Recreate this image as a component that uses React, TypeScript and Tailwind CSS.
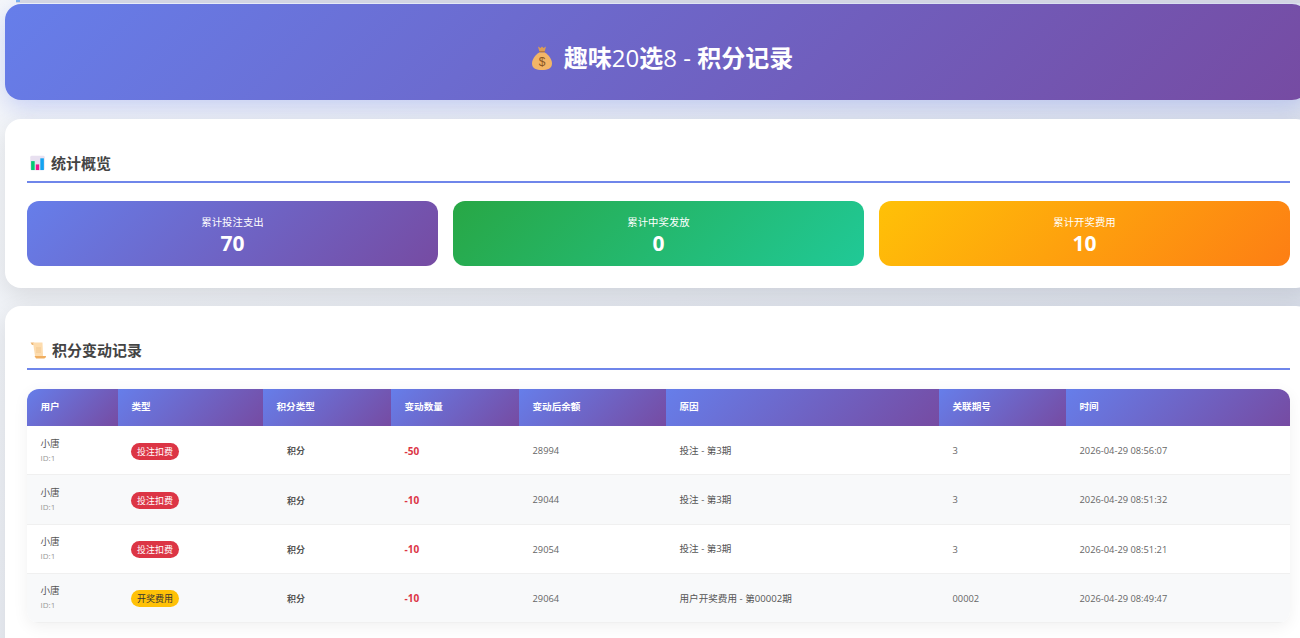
const cjk = "font-['Open_Sans','Noto_Sans_CJK_SC',sans-serif]";

function Bag() {
  return (
    <svg viewBox="0 0 20 24" className="w-[20px] h-[24px]">
      <path d="M6 0.5l2.5 1.5L10 0.5 11.5 2 14 0.5 12.8 5H7.2z" fill="#dd9c55" />
      <path d="M7.5 5h5l.6 1.6H6.9z" fill="#b9793c" />
      <path d="M7.2 6.5C3 9 0 13.5 0 17.5 0 22.5 4.5 24 10 24s10-1.5 10-6.500C20 13.500 17 9 12.800 6.500z" fill="#f3b566" />
      <text x="10" y="20" textAnchor="middle" fontSize="12" fontWeight="400" fill="#8a5524" fontFamily="Liberation Sans, sans-serif">$</text>
    </svg>
  );
}
function Chart() {
  return (
    <svg viewBox="0 0 16 16" className="w-[15px] h-[16px]">
      <rect x="0.3" y="0.3" width="15.400" height="15.400" rx="1.500" fill="#e8e0f0" />
      <rect x="1.200" y="6" width="3.800" height="9.500" fill="#06c873" />
      <rect x="6.200" y="9.500" width="3.600" height="6" fill="#f0128c" />
      <rect x="11" y="3" width="3.800" height="12.500" fill="#14a3f0" />
    </svg>
  );
}
function Scroll() {
  return (
    <svg viewBox="0 0 16 17" className="w-[16px] h-[17px]">
      <path d="M0.500 0.500h3a1.500 1.500 0 0 1 1.500 1.500v1H2z" fill="#edb878" />
      <path d="M3 0.500h9.500L13 14H5z" fill="#fddcae" />
      <path d="M6 6h5M6 8h5M6 10h5" stroke="#f0c48c" strokeWidth="0.900" />
      <path d="M4.500 14H16c0 1.500-.8 2.500-2 2.500H6z" fill="#f0ae60" />
    </svg>
  );
}
const Grad = "bg-[linear-gradient(135deg,#667eea,#764ba2)]";
const cols = ["w-[91px]", "w-[145px]", "w-[128px]", "w-[128px]", "w-[147px]", "w-[273px]", "w-[127px]", "w-[224px]"];
const heads = ["用户", "类型", "积分类型", "变动数量", "变动后余额", "原因", "关联期号", "时间"];
const rows = [
  { t: "投注扣费", n: "-50", b: "28994", r: "投注 - 第3期", q: "3", d: "2026-04-29 08:56:07", h: "h-[48.5px]" },
  { t: "投注扣费", n: "-10", b: "29044", r: "投注 - 第3期", q: "3", d: "2026-04-29 08:51:32", h: "h-[49.5px]" },
  { t: "投注扣费", n: "-10", b: "29054", r: "投注 - 第3期", q: "3", d: "2026-04-29 08:51:21", h: "h-[49px]" },
  { t: "开奖费用", n: "-10", b: "29064", r: "用户开奖费用 - 第00002期", q: "00002", d: "2026-04-29 08:49:47", h: "h-[49.5px]" },
];

function Stat({ label, value, cls }: { label: string; value: string; cls: string }) {
  return (
    <div className={`flex-1 h-[65px] rounded-[12px] flex flex-col items-center justify-center pt-[3px] text-white ${cls}`}>
      <div className="text-[10.4px] leading-[14px]">{label}</div>
      <div className="text-[21px] leading-[24px] mt-[2px] font-bold">{value}</div>
    </div>
  );
}
function Title({ icon, children }: { icon: React.ReactNode; children: React.ReactNode }) {
  return (
    <div className="h-[26px] border-b-2 border-[#6f86ea] flex items-start pl-[3px] gap-[6px] text-[#444] font-bold text-[15px] leading-[18px] box-content">
      <span className="mt-[0px]">{icon}</span>
      <span className="-mt-[1px]">{children}</span>
    </div>
  );
}

export default function App() {
  return (
    <div className={`w-[1300px] h-[638px] overflow-hidden bg-[linear-gradient(135deg,#f5f7fa,#d5dbe8)] ${cjk}`}>
      <div className="h-[3px] ml-[16px] bg-[#d9dae3] flex items-start">
        <div className="w-[4px] h-[2px] bg-[#7ab0f0]" />
      </div>
      <div className="w-[1307px] ml-[5px] pt-[1px]">
        <div className={`w-[1303px] h-[96px] rounded-[16px] flex items-center justify-center gap-[12px] pl-[12px] pt-[12px] text-white text-[24px] font-bold shadow-[0_8px_24px_rgba(102,126,234,0.3)] ${Grad}`}>
          <Bag />
          <span>趣味<span className="font-medium">20</span>选<span className="font-medium">8 - </span>积分记录</span>
        </div>
        <section className="mt-[19px] h-[169px] bg-white rounded-[16px] px-[22px] pt-[36px] shadow-[0_8px_24px_rgba(0,0,0,0.1)]">
          <Title icon={<Chart />}>统计概览</Title>
          <div className="flex gap-[15px] mt-[18px]">
            <Stat label="累计投注支出" value="70" cls={Grad} />
            <Stat label="累计中奖发放" value="0" cls="bg-[linear-gradient(135deg,#28a745,#20c997)]" />
            <Stat label="累计开奖费用" value="10" cls="bg-[linear-gradient(135deg,#ffc107,#fd7e14)]" />
          </div>
        </section>
        <section className="mt-[18px] h-[400px] bg-white rounded-[16px] px-[22px] pt-[36px] shadow-[0_8px_24px_rgba(0,0,0,0.1)]">
          <Title icon={<Scroll />}>积分变动记录</Title>
          <div className="mt-[19px] w-[1263px] rounded-[12px] overflow-hidden shadow-[0_4px_16px_rgba(0,0,0,0.06)]">
            <table className="w-full table-fixed border-collapse text-[9.6px]">
              <colgroup>{cols.map((c, i) => <col key={i} className={c} />)}</colgroup>
              <thead>
                <tr className="h-[37px]">
                  {heads.map((h) => (
                    <th key={h} className={`text-left pl-[13.5px] font-bold text-white ${Grad}`}>{h}</th>
                  ))}
                </tr>
              </thead>
              <tbody>
                {rows.map((r, i) => (
                  <tr key={i} className={`${r.h} border-b border-[#f0f0f0] ${i % 2 ? "bg-[#f8f9fa]" : "bg-white"}`}>
                    <td className="pl-[13.5px] pt-[1px]">
                      <div className="text-[#555] text-[9.6px] leading-[14px]">小唐</div>
                      <div className="text-[#999] text-[8px] leading-[14px]">ID:1</div>
                    </td>
                    <td className="pl-[13px] pt-[2px]">
                      <span className={`inline-block rounded-full px-[6px] h-[17px] text-[9px] leading-[17px] ${r.t === "开奖费用" ? "bg-[#ffc107] text-[#333]" : "bg-[#dc3545] text-white"}`}>{r.t}</span>
                    </td>
                    <td className="pl-[24px] pt-[2px] text-[#555] text-[9px] font-bold">积分</td>
                    <td className="pl-[13.5px] pt-[2px] text-[#dc3545] text-[10px] font-bold">{r.n}</td>
                    <td className="pl-[13.5px] pt-[2px] text-[#666] text-[9.300px]">{r.b}</td>
                    <td className="pl-[13.5px] pt-[2px] text-[#555]">{r.r}</td>
                    <td className="pl-[13.5px] pt-[2px] text-[#666] text-[9.300px]">{r.q}</td>
                    <td className="pl-[13.5px] pt-[2px] text-[#666] text-[9.300px]">{r.d}</td>
                  </tr>
                ))}
              </tbody>
            </table>
          </div>
        </section>
      </div>
    </div>
  );
}
